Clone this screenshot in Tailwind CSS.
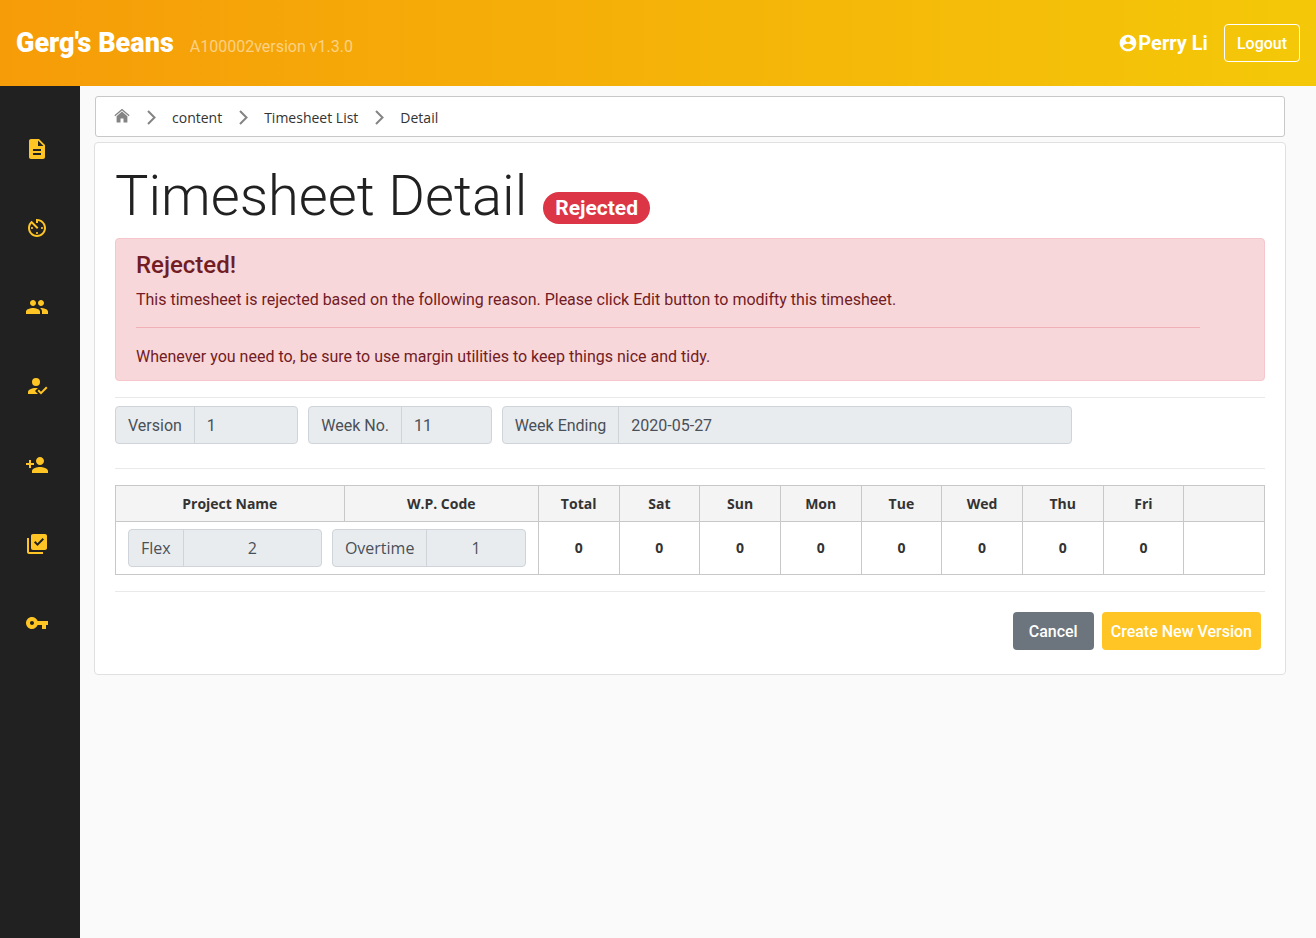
<!DOCTYPE html>
<html lang="en">
<head>
<meta charset="utf-8">
<meta name="viewport" content="width=device-width, initial-scale=1">
<title>Timesheet Detail</title>
<script src="https://cdn.jsdelivr.net/npm/@tailwindcss/browser@4"></script>
</head>
<body class="flex min-h-screen flex-col bg-[#fafafa] font-['Roboto',sans-serif] text-base text-[#212121]">
<header class="flex h-[86px] items-center justify-between bg-linear-to-r/srgb from-[#f69c08] to-[#f4c808] px-4 text-white">
  <div class="flex items-baseline gap-4">
    <a href="#" class="text-[27px] leading-9 font-black">Gerg's Beans</a>
    <span class="text-white/50">A100002version v1.3.0</span>
  </div>
  <div class="flex items-center gap-4">
    <span class="flex items-center text-xl font-bold">
      <svg class="size-5" viewBox="0 0 24 24" fill="currentColor" aria-hidden="true"><path d="M12 2C6.48 2 2 6.48 2 12s4.480 10 10 10 10-4.480 10-10S17.520 2 12 2zm0 3c1.660 0 3 1.340 3 3s-1.340 3-3 3-3-1.340-3-3 1.340-3 3-3zm0 14.200c-2.500 0-4.710-1.280-6-3.220.030-1.990 4-3.080 6-3.080 1.990 0 5.970 1.090 6 3.080-1.290 1.940-3.500 3.220-6 3.220z"/></svg>
      Perry Li</span>
    <button type="button" class="h-[38px] rounded border border-white px-3 pt-0.5 font-medium">Logout</button>
  </div>
</header>
<div class="flex flex-1">
  <nav aria-label="Main" class="flex w-20 shrink-0 flex-col items-start gap-[55px] bg-[#212121] pt-[51px] pl-[25px] text-[#ffc524]">
    <a href="#" aria-label="Timesheets"><svg class="size-6" viewBox="0 0 24 24" fill="currentColor"><path d="M14 2H6c-1.100 0-1.990.9-1.990 2L4 20c0 1.100.89 2 1.990 2H18c1.100 0 2-.9 2-2V8l-6-6zm2 16H8v-2h8v2zm0-4H8v-2h8v2zm-3-5V3.500L18.500 9H13z"/></svg></a>
    <a href="#" aria-label="Timer"><svg class="size-6" viewBox="0 0 24 24" fill="currentColor"><path d="M11 17c0 .55.45 1 1 1s1-.45 1-1-.45-1-1-1-1 .45-1 1zm0-14v4h2V5.080c3.390.49 6 3.390 6 6.920 0 3.870-3.130 7-7 7s-7-3.130-7-7c0-1.680.59-3.220 1.580-4.420L12 13l1.410-1.410-6.800-6.800v.02C4.420 6.450 3 9.050 3 12c0 4.970 4.020 9 9 9 4.970 0 9-4.030 9-9s-4.030-9-9-9h-1zm7 9c0-.55-.45-1-1-1s-1 .45-1 1 .45 1 1 1 1-.45 1-1zM6 12c0 .55.45 1 1 1s1-.45 1-1-.45-1-1-1-1 .45-1 1z"/></svg></a>
    <a href="#" aria-label="Employees"><svg class="size-6" viewBox="0 0 24 24" fill="currentColor"><path d="M16 11c1.660 0 2.990-1.340 2.990-3S17.660 5 16 5c-1.660 0-3 1.340-3 3s1.340 3 3 3zm-8 0c1.660 0 2.990-1.340 2.990-3S9.660 5 8 5C6.340 5 5 6.340 5 8s1.340 3 3 3zm0 2c-2.330 0-7 1.170-7 3.500V19h14v-2.500c0-2.330-4.670-3.500-7-3.500zm8 0c-.29 0-.62.02-.97.05 1.160.84 1.970 1.970 1.970 3.450V19h6v-2.500c0-2.330-4.670-3.500-7-3.500z"/></svg></a>
    <a href="#" aria-label="Approvals"><svg class="size-6" viewBox="0 0 24 24" fill="currentColor"><path d="M21.100 12.500L22.500 13.910L15.970 20.500L12.500 17L13.900 15.590L15.970 17.670L21.100 12.500M10 17L13 20H3V18C3 15.790 6.580 14 11 14L12.890 14.110L10 17M11 4A4 4 0 0 1 15 8A4 4 0 0 1 11 12A4 4 0 0 1 7 8A4 4 0 0 1 11 4Z"/></svg></a>
    <a href="#" aria-label="Add employee"><svg class="size-6" viewBox="0 0 24 24" fill="currentColor"><path d="M15 12c2.210 0 4-1.790 4-4s-1.790-4-4-4-4 1.790-4 4 1.790 4 4 4zm-9-2V7H4v3H1v2h3v3h2v-3h3v-2H6zm9 4c-2.670 0-8 1.340-8 4v2h16v-2c0-2.660-5.330-4-8-4z"/></svg></a>
    <a href="#" aria-label="Work packages"><svg class="size-6" viewBox="0 0 24 24" fill="currentColor"><path d="M20 2H8c-1.100 0-2 .9-2 2v12c0 1.100.9 2 2 2h12c1.100 0 2-.9 2-2V4c0-1.100-.9-2-2-2zm-7.530 12L9 10.500l1.400-1.410 2.070 2.080L17.600 6 19 7.410 12.470 14zM4 6H2v14c0 1.100.9 2 2 2h14v-2H4V6z"/></svg></a>
    <a href="#" aria-label="Password"><svg class="size-6" viewBox="0 0 24 24" fill="currentColor"><path d="M12.650 10C11.830 7.670 9.610 6 7 6c-3.310 0-6 2.690-6 6s2.690 6 6 6c2.610 0 4.830-1.670 5.650-4H17v4h4v-4h2v-4H12.650zM7 14c-1.100 0-2-.9-2-2s.9-2 2-2 2 .9 2 2-.9 2-2 2z"/></svg></a>
  </nav>
  <main class="min-w-0 flex-1 pt-[10px] pr-[30px] pl-[14px]">
    <nav aria-label="Breadcrumb" class="mx-px flex h-[41px] items-center gap-[13px] rounded-[3px] border border-[#c8c8c8] bg-white pt-0.5 pl-[18px] font-['Open_Sans',sans-serif] text-sm text-[#333333]">
      <a href="#" aria-label="Home" class="text-[#848484]"><svg class="mb-1 size-4" viewBox="0 0 16 16" fill="currentColor"><path d="M8 .8 15.600 7.200 14.800 8.200 8 2.500 1.200 8.200.4 7.200zM8 3.600 13.400 8.200V14.500H9.500V10.500H6.500V14.500H2.600V8.200z"/></svg></a>
      <svg class="size-4" viewBox="0 0 16 16" fill="none" stroke="#848484" stroke-width="2" aria-hidden="true"><path d="M5 1l6.500 6.500L5 14"/></svg>
      <a href="#">content</a>
      <svg class="size-4" viewBox="0 0 16 16" fill="none" stroke="#848484" stroke-width="2" aria-hidden="true"><path d="M5 1l6.500 6.500L5 14"/></svg>
      <a href="#">Timesheet List</a>
      <svg class="size-4" viewBox="0 0 16 16" fill="none" stroke="#848484" stroke-width="2" aria-hidden="true"><path d="M5 1l6.500 6.500L5 14"/></svg>
      <a href="#" aria-current="page">Detail</a>
    </nav>
    <section class="mt-[5px] rounded border border-[#e0e0e0] bg-white px-5 pt-5 pb-6">
      <div class="mb-2 flex items-baseline gap-4">
        <h1 class="text-[56px] leading-[67px] font-light">Timesheet Detail</h1>
        <span class="rounded-full bg-[#dc3545] px-3 text-[21px] leading-8 font-bold text-white">Rejected</span>
      </div>
      <div role="alert" class="rounded border border-[#f5c6cb] bg-[#f8d7da] pt-3 pr-16 pb-[11px] pl-5 text-[#721c24]">
        <h2 class="mb-2 text-2xl leading-[29px] font-medium">Rejected!</h2>
        <p>This timesheet is rejected based on the following reason. Please click Edit button to modifty this timesheet.</p>
        <hr class="mt-[15px] mb-[17px] border-[#f1b0b7]">
        <p>Whenever you need to, be sure to use margin utilities to keep things nice and tidy.</p>
      </div>
      <hr class="mt-4 mb-2 border-[#e9e9e9]">
      <div class="mb-6 grid grid-cols-12 gap-x-[10px] text-[#495057]">
        <div class="col-span-2 flex h-[38px] overflow-hidden rounded border border-[#ced4da] bg-[#e9ecef]">
          <label for="version" class="border-r border-[#ced4da] px-3 pt-px leading-9 whitespace-nowrap">Version</label>
          <input id="version" class="w-full min-w-0 px-3 pt-0.5" value="1" readonly>
        </div>
        <div class="col-span-2 flex h-[38px] overflow-hidden rounded border border-[#ced4da] bg-[#e9ecef]">
          <label for="week-no" class="border-r border-[#ced4da] px-3 pt-px leading-9 whitespace-nowrap">Week No.</label>
          <input id="week-no" class="w-full min-w-0 px-3 pt-0.5" value="11" readonly>
        </div>
        <div class="col-span-6 flex h-[38px] overflow-hidden rounded border border-[#ced4da] bg-[#e9ecef]">
          <label for="week-end" class="border-r border-[#ced4da] px-3 pt-px leading-9 whitespace-nowrap">Week Ending</label>
          <input id="week-end" class="w-full min-w-0 px-3 pt-0.5" value="2020-05-27" readonly>
        </div>
      </div>
      <hr class="mb-4 border-[#e9e9e9]">
      <table class="w-full table-fixed border-collapse font-['Open_Sans',sans-serif] text-sm font-bold text-[#333333]">
        <colgroup><col class="w-[19.9%]"><col class="w-[16.9%]"><col span="9"></colgroup>
        <thead>
          <tr class="h-9 bg-[#f4f4f4] *:border *:border-[#c8c8c8]">
            <th>Project Name</th><th>W.P. Code</th><th>Total</th><th>Sat</th><th>Sun</th><th>Mon</th><th>Tue</th><th>Wed</th><th>Thu</th><th>Fri</th><td></td>
          </tr>
        </thead>
        <tbody>
          <tr class="h-[53px] text-center *:border *:border-[#c8c8c8]">
            <td colspan="2" class="px-3">
              <div class="grid grid-cols-2 gap-[10px] text-base font-normal text-[#495057]">
                <div class="flex h-[38px] overflow-hidden rounded border border-[#ced4da] bg-[#e9ecef]">
                  <label for="flex-time" class="border-r border-[#ced4da] px-3 leading-9">Flex</label>
                  <input id="flex-time" class="w-full min-w-0 px-3 text-center" value="2" readonly>
                </div>
                <div class="flex h-[38px] overflow-hidden rounded border border-[#ced4da] bg-[#e9ecef]">
                  <label for="overtime" class="border-r border-[#ced4da] px-3 leading-9">Overtime</label>
                  <input id="overtime" class="w-full min-w-0 px-3 text-center" value="1" readonly>
                </div>
              </div>
            </td>
            <td>0</td><td>0</td><td>0</td><td>0</td><td>0</td><td>0</td><td>0</td><td>0</td><td></td>
          </tr>
        </tbody>
      </table>
      <hr class="mt-4 mb-5 border-[#e9e9e9]">
      <div class="mr-1 flex justify-end gap-2 font-medium text-white">
        <button type="button" class="h-[38px] rounded bg-[#6c757d] px-4 pt-0.5">Cancel</button>
        <button type="button" class="h-[38px] rounded bg-[#ffc524] px-[9px] pt-0.5">Create New Version</button>
      </div>
    </section>
  </main>
</div>
</body>
</html>
